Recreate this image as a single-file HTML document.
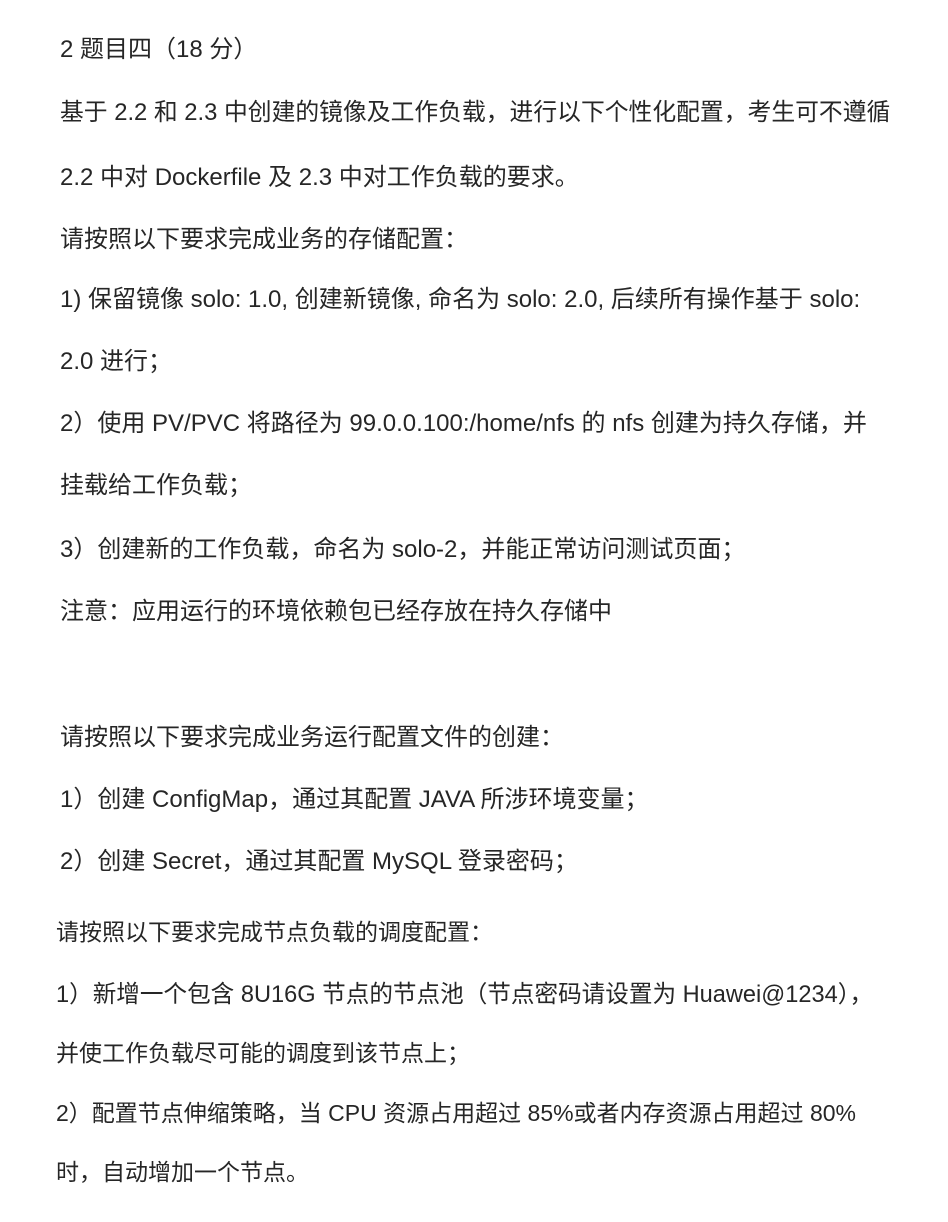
<!DOCTYPE html>
<html><head><meta charset="utf-8">
<style>
html,body{margin:0;padding:0;background:#fff;}
body{width:948px;height:1222px;position:relative;overflow:hidden;font-family:"Liberation Sans","Noto Sans CJK SC",sans-serif;color:#262626;}
.l{position:absolute;white-space:nowrap;font-size:24px;line-height:30px;}
.s{font-size:23px;}
</style></head><body>
<div class="l" style="left:60px;top:35px">2 题目四（18 分）</div>
<div class="l" style="left:60px;top:98px;font-size:23.8px">基于 2.2 和 2.3 中创建的镜像及工作负载，进行以下个性化配置，考生可不遵循</div>
<div class="l" style="left:60px;top:163px">2.2 中对 Dockerfile 及 2.3 中对工作负载的要求。</div>
<div class="l" style="left:60px;top:225px">请按照以下要求完成业务的存储配置：</div>
<div class="l" style="left:60px;top:285px">1) 保留镜像 solo: 1.0, 创建新镜像, 命名为 solo: 2.0, 后续所有操作基于 solo:</div>
<div class="l" style="left:60px;top:347px">2.0 进行；</div>
<div class="l" style="left:60px;top:409px">2）使用 PV/PVC 将路径为 99.0.0.100:/home/nfs 的 nfs 创建为持久存储，并</div>
<div class="l" style="left:60px;top:471px">挂载给工作负载；</div>
<div class="l" style="left:60px;top:535px">3）创建新的工作负载，命名为 solo-2，并能正常访问测试页面；</div>
<div class="l" style="left:60px;top:597px">注意：应用运行的环境依赖包已经存放在持久存储中</div>
<div class="l" style="left:60px;top:723px">请按照以下要求完成业务运行配置文件的创建：</div>
<div class="l" style="left:60px;top:785px">1）创建 ConfigMap，通过其配置 JAVA 所涉环境变量；</div>
<div class="l" style="left:60px;top:847px">2）创建 Secret，通过其配置 MySQL 登录密码；</div>
<div class="l s" style="left:56px;top:917px">请按照以下要求完成节点负载的调度配置：</div>
<div class="l s" style="left:56px;top:980px;font-size:23.6px">1）新增一个包含 8U16G 节点的节点池（节点密码请设置为 Huawei@1234），</div>
<div class="l s" style="left:56px;top:1038px">并使工作负载尽可能的调度到该节点上；</div>
<div class="l s" style="left:56px;top:1098px">2）配置节点伸缩策略，当 CPU 资源占用超过 85%或者内存资源占用超过 80%</div>
<div class="l s" style="left:56px;top:1157px">时，自动增加一个节点。</div>
</body></html>
